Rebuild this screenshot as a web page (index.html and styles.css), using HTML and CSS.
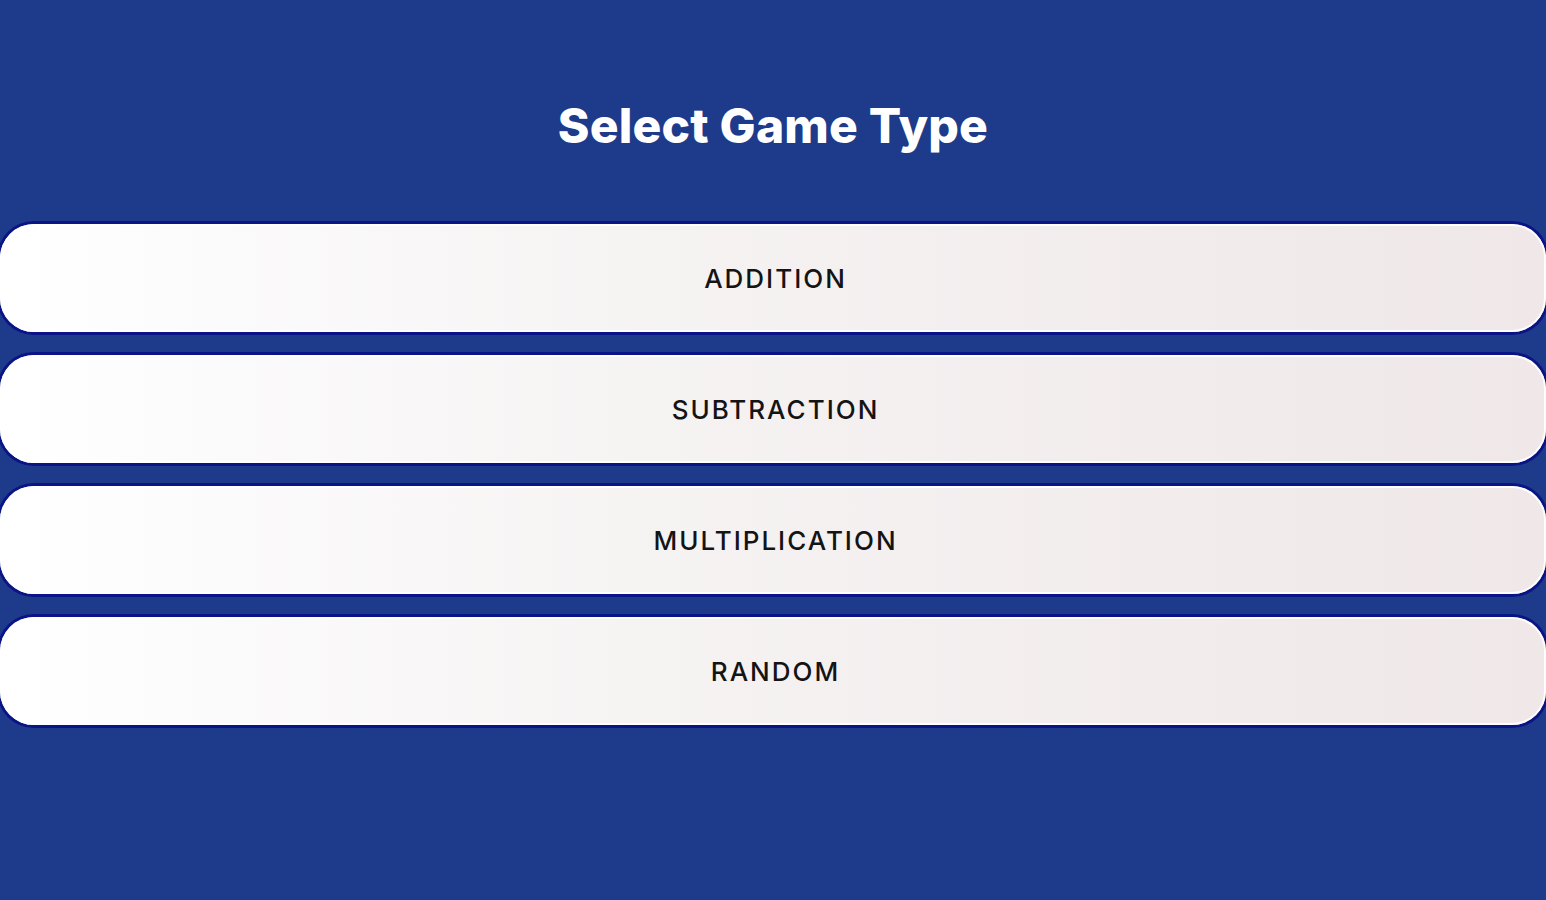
FILE: index.html
```html
<!DOCTYPE html>
<html>
<head>
<meta charset="utf-8">
<link rel="stylesheet" href="styles.css">
</head>
<body>
<main class="screen">
  <h1 class="title">Select Game Type</h1>
  <div class="options">
    <button class="option">ADDITION</button>
    <button class="option">SUBTRACTION</button>
    <button class="option">MULTIPLICATION</button>
    <button class="option">RANDOM</button>
  </div>
</main>
</body>
</html>
```
FILE: styles.css
```css
html, body {
  margin: 0;
  padding: 0;
  background: #1e3a8a;
  height: 100%;
}
.screen {
  display: flex;
  flex-direction: column;
  align-items: stretch;
  padding-top: 96px;
}
.title {
  margin: 0;
  text-align: center;
  color: #ffffff;
  font-family: "Inter", "Lato", sans-serif;
  font-weight: 800;
  font-size: 48px;
  line-height: 60px;
  letter-spacing: 0.2px;
}
.options {
  display: flex;
  flex-direction: column;
  gap: 23px;
  margin-top: 68px;
}
.option {
  height: 108px;
  width: 100%;
  border: none;
  border-radius: 34px;
  background: linear-gradient(90deg, #ffffff 0%, #f6f3f3 40%, #efe7e8 100%);
  box-shadow: inset 0 0 0 2px rgba(255,255,255,0.9), 0 0 0 3px #0a1486;
  font-family: "Inter", "Noto Sans", sans-serif;
  font-weight: 500;
  font-size: 26px;
  letter-spacing: 2px;
  color: #141414;
  padding: 0 0 0 5px;
  cursor: pointer;
}
```
